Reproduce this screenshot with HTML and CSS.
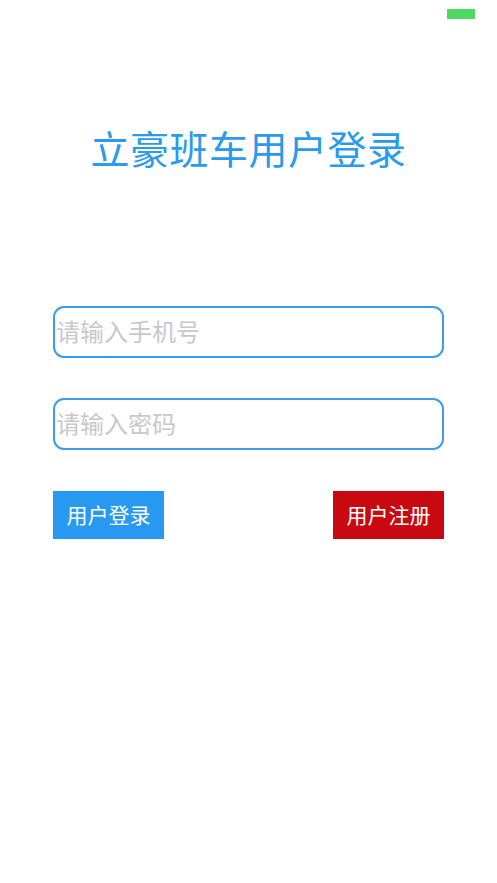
FILE: index.html
```html
<!DOCTYPE html>
<html lang="zh-CN">
<head>
  <meta charset="UTF-8" />
  <meta name="viewport" content="width=device-width, initial-scale=1.0"/>
  <title>立豪班车用户登录</title>
  <link rel="stylesheet" href="styles.css">
</head>
<body>
  <div class="status-bar">
    <span class="battery"></span>
  </div>

  <h1 class="title">立豪班车用户登录</h1>

  <form class="login-form">
    <input type="tel" class="field" placeholder="请输入手机号" />
    <input type="password" class="field" placeholder="请输入密码" />
    <div class="actions">
      <button type="button" class="btn btn-login">用户登录</button>
      <button type="button" class="btn btn-register">用户注册</button>
    </div>
  </form>
</body>
</html>
```

FILE: styles.css
```css
body {
  margin: 0;
  background: #fff;
  font-family: "Noto Sans CJK SC", "Noto Sans", sans-serif;
}
.status-bar {
  height: 28px;
  display: flex;
  justify-content: flex-end;
  align-items: flex-start;
}
.battery {
  width: 28px;
  height: 10px;
  margin-top: 9px;
  margin-right: 22px;
  background: #4cd964;
}
.title {
  margin: 97px 0 0;
  text-align: center;
  font-size: 39px;
  line-height: 44px;
  font-weight: normal;
  letter-spacing: 0.5px;
  color: #2a9bec;
}
.login-form {
  margin-top: 137px;
  padding: 0 53px;
  display: flex;
  flex-direction: column;
  gap: 40px;
}
.field {
  box-sizing: border-box;
  height: 52px;
  width: 100%;
  padding: 0 0 4px 1px;
  border: 2px solid #3a9cf0;
  border-radius: 11px;
  font-family: inherit;
  font-size: 24px;
  outline: none;
}
.field::placeholder {
  color: #c8c8cc;
}
.actions {
  margin-top: 1px;
  display: flex;
  justify-content: space-between;
}
.btn {
  width: 111px;
  height: 48px;
  border: none;
  border-radius: 0;
  color: #fff;
  font-family: inherit;
  font-size: 21px;
  padding: 0 0 2px;
  cursor: pointer;
}
.btn-login {
  background: #2899f0;
}
.btn-register {
  background: #c80a10;
}
```
